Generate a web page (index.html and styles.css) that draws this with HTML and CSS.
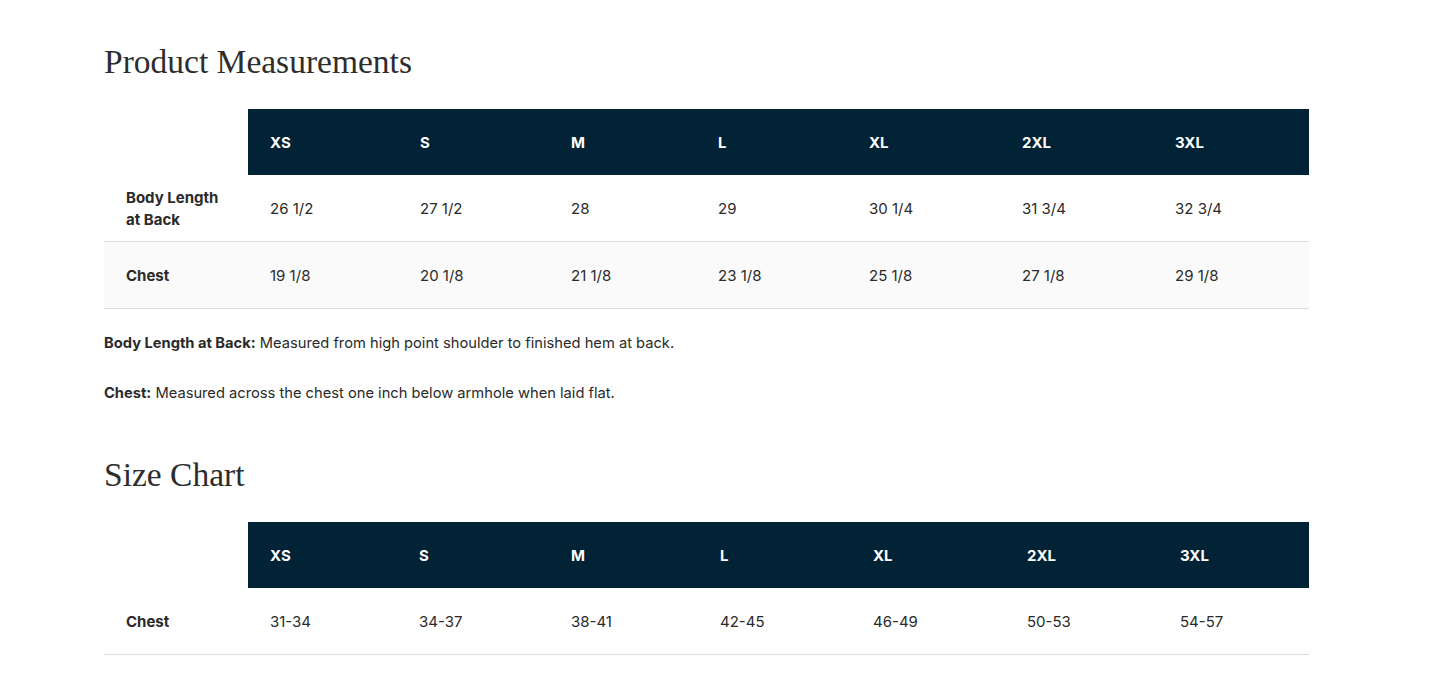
FILE: index.html
```html
<!DOCTYPE html>
<html>
<head>
<meta charset="utf-8">
<link rel="stylesheet" href="styles.css">
</head>
<body>
<main class="page">
  <section class="block block-measure">
    <h2 class="title">Product Measurements</h2>
    <table class="chart chart-a">
      <thead>
        <tr><th class="corner"></th><th>XS</th><th>S</th><th>M</th><th>L</th><th>XL</th><th>2XL</th><th>3XL</th></tr>
      </thead>
      <tbody>
        <tr><td class="label">Body Length<br>at Back</td><td>26 1/2</td><td>27 1/2</td><td>28</td><td>29</td><td>30 1/4</td><td>31 3/4</td><td>32 3/4</td></tr>
        <tr class="alt"><td class="label">Chest</td><td>19 1/8</td><td>20 1/8</td><td>21 1/8</td><td>23 1/8</td><td>25 1/8</td><td>27 1/8</td><td>29 1/8</td></tr>
      </tbody>
    </table>
    <p class="note"><strong>Body Length at Back:</strong> Measured from high point shoulder to finished hem at back.</p>
    <p class="note"><strong>Chest:</strong> Measured across the chest one inch below armhole when laid flat.</p>
  </section>
  <section class="block block-size">
    <h2 class="title">Size Chart</h2>
    <table class="chart chart-b">
      <thead>
        <tr><th class="corner"></th><th>XS</th><th>S</th><th>M</th><th>L</th><th>XL</th><th>2XL</th><th>3XL</th></tr>
      </thead>
      <tbody>
        <tr><td class="label">Chest</td><td>31-34</td><td>34-37</td><td>38-41</td><td>42-45</td><td>46-49</td><td>50-53</td><td>54-57</td></tr>
      </tbody>
    </table>
  </section>
</main>
</body>
</html>
```

FILE: styles.css
```css
html, body {
  margin: 0;
  padding: 0;
  background: #ffffff;
}
body {
  font-family: Inter, "Noto Sans", sans-serif;
  color: #222222;
}
.page {
  width: 1205px;
  padding: 43px 0 0 104px;
}
.title {
  margin: 0;
  font-family: "Liberation Serif", "DejaVu Serif", serif;
  font-weight: 400;
  font-size: 33.5px;
  line-height: 38px;
  color: #2d2d2d;
}
.block-size {
  margin-top: 51px;
}
.chart {
  width: 1205px;
  border-collapse: collapse;
  table-layout: fixed;
  margin-top: 28px;
  font-size: 15px;
}
.chart th {
  background: #022236;
  color: #ffffff;
  font-weight: 700;
  font-size: 15px;
  text-align: left;
  height: 66px;
  padding: 0 0 0 22px;
}
.chart th.corner {
  background: transparent;
  width: 122px;
}
.chart td {
  height: 65px;
  padding: 1px 0 0 22px;
  border-bottom: 1px solid #dcdcdc;
  color: #2a2a2a;
  line-height: 22px;
}
.chart td.label {
  font-weight: 700;
  color: #2a2a2a;
}
.chart tr.alt td {
  background: #fafafa;
}
.chart-a th:nth-child(2) { width: 128px; }
.chart-a th:nth-child(3) { width: 129px; }
.chart-a th:nth-child(4) { width: 125px; }
.chart-a th:nth-child(5) { width: 129px; }
.chart-a th:nth-child(6) { width: 131px; }
.chart-a th:nth-child(7) { width: 131px; }
.chart-b th:nth-child(2) { width: 127px; }
.chart-b th:nth-child(3) { width: 130px; }
.chart-b th:nth-child(4) { width: 127px; }
.chart-b th:nth-child(5) { width: 131px; }
.chart-b th:nth-child(6) { width: 132px; }
.chart-b th:nth-child(7) { width: 131px; }
.note {
  margin: 22px 0 0 0;
  font-size: 14.7px;
  line-height: 24px;
  color: #2a2a2a;
}
.note + .note {
  margin-top: 26px;
}
.note strong {
  font-weight: 700;
}
```
